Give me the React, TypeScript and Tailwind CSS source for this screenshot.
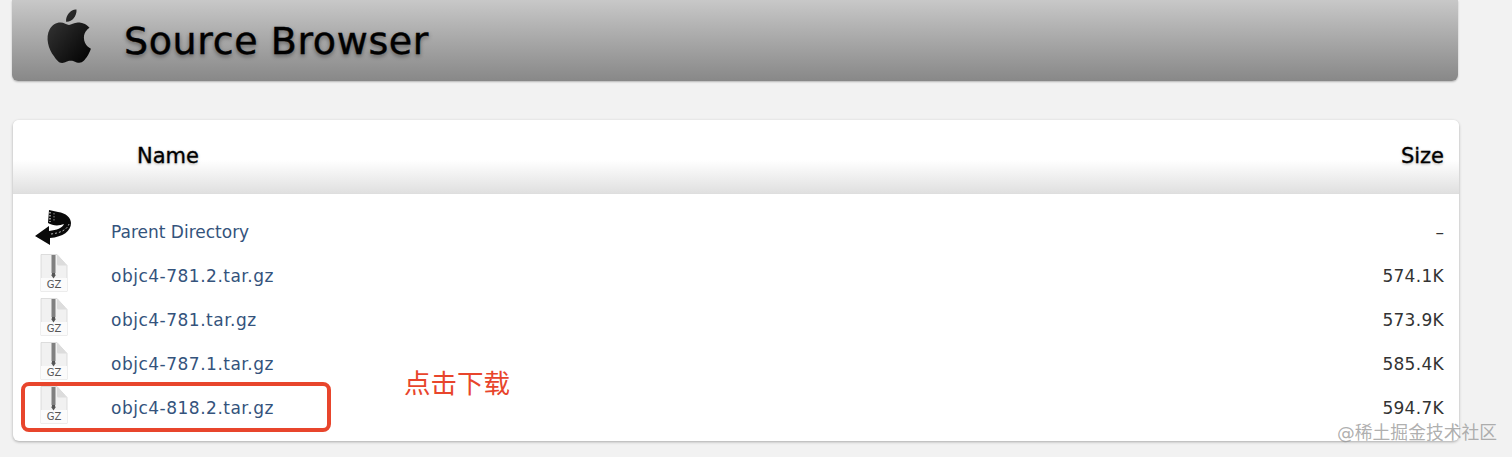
const files = [
  { name: 'objc4-781.2.tar.gz', size: '574.1K' },
  { name: 'objc4-781.tar.gz', size: '573.9K' },
  { name: 'objc4-787.1.tar.gz', size: '585.4K' },
  { name: 'objc4-818.2.tar.gz', size: '594.7K' },
]

function AppleLogo() {
  return (
    <svg width="46" height="54" viewBox="0 0 46 52" preserveAspectRatio="none" aria-hidden="true">
      <defs>
        <linearGradient id="apple" x1="0" y1="0" x2="1" y2="1">
          <stop offset="0" stopColor="#3a3a3a" />
          <stop offset="1" stopColor="#000000" />
        </linearGradient>
      </defs>
      <path
        fill="url(#apple)"
        d="M31.5 0.5c.3 3.4-1 6.3-2.8 8.4-1.9 2.2-4.7 3.7-7.6 3.4-.4-3 1-6.2 2.7-8.1C25.700 1.600 28.900.2 31.500.5zM44.500 18c-.3.2-5.700 3.300-5.600 9.800.1 7.800 6.900 10.400 7 10.400-.1.200-1.100 3.700-3.600 7.300-2.200 3.100-4.400 6.200-8 6.300-3.500.1-4.600-2-8.600-2s-5.200 1.900-8.500 2.100c-3.400.1-6-3.400-8.200-6.500C3.500 39.100.1 27.400 4.700 19.500c2.300-3.900 6.300-6.400 10.700-6.400 3.300-.1 6.500 2.200 8.600 2.200s5.400-2.700 9.800-2.300c1.800.1 7 .7 10.700 5z"
      />
    </svg>
  )
}

function BackIcon() {
  return (
    <svg width="36" height="36" viewBox="0 0 36 36" aria-hidden="true">
      <path
        fill="#0a0a0a"
        d="M14 1l9 2C31 4 36 9 36 14c0 8-8 14-21 15v7L0 27l14-10v5c8-1 13-3 15-7-5 2-11 2-16-1z"
      />
      <path fill="none" stroke="#b5b5b5" strokeWidth="1.500" strokeDasharray="1.500 1.500" d="M15 3v10" />
      <path fill="none" stroke="#8a8a8a" strokeWidth="1" strokeDasharray="1.500 1.500" d="M19 4v9" />
      <path fill="none" stroke="#e5e5e5" strokeWidth="0.800" strokeDasharray="2 2" d="M16 25c9-1 16-4 18-10" />
    </svg>
  )
}

function ZipIcon() {
  return (
    <svg width="28" height="38" viewBox="0 0 28 38" aria-hidden="true">
      <path fill="#f1f1f1" stroke="#d6d6d6" strokeWidth="0.800" d="M1 .5h16l10 11v26H1z" />
      <path fill="#dcdcdc" d="M17 .5l10 11H18.500a1.500 1.500 0 0 1-1.500-1.500z" />
      <rect x="1" y="24" width="26" height="13.500" fill="#fbfbfb" />
      <rect x="11.500" y="1" width="4" height="18" fill="#808080" />
      <path fill="#555555" d="M12 19h3l.5 2.500-2 3-2-3z" />
      <text x="14" y="33.500" textAnchor="middle" fontSize="10" fill="#555555" fontFamily="'DejaVu Sans', sans-serif">
        GZ
      </text>
    </svg>
  )
}

export default function App() {
  return (
    <div className="relative h-[457px] w-[1512px] overflow-hidden bg-[#f2f2f2] font-['DejaVu_Sans','Noto_Sans_CJK_SC',sans-serif]">
      <div className="ml-3 flex h-[81px] w-[1446px] items-center rounded-b-md bg-gradient-to-b from-[#c8c8c8] to-[#888888] pl-[33px] shadow-[0_1px_2px_rgba(0,0,0,0.25)]">
        <div className="mb-[9px]">
          <AppleLogo />
        </div>
        <h1 className="ml-[33px] text-[38px] leading-none tracking-[0.6px] text-black [-webkit-text-stroke:0.4px_black] [text-shadow:0_2px_4px_rgba(0,0,0,0.45)]">
          Source Browser
        </h1>
      </div>

      <div className="mt-[39px] ml-[13px] w-[1446px] rounded-md bg-white shadow-[0_1px_3px_rgba(0,0,0,0.3)]">
        <div className="flex h-[74px] items-start justify-between rounded-t-md border-b border-[#dedede] bg-gradient-to-b from-white from-[55%] to-[#e0e0e0] pt-[23px] pr-[15px] pl-[124px] text-[21px] leading-[26px] text-black [-webkit-text-stroke:0.3px_black] [text-shadow:0_1px_3px_rgba(0,0,0,0.35)]">
          <span>Name</span>
          <span>Size</span>
        </div>

        <div className="pt-[15px] pb-[12px]">
          <div className="flex h-11 items-center pr-[15px]">
            <div className="mb-[8px] w-[98px] pl-[22px]">
              <BackIcon />
            </div>
            <a className="flex-1 pt-[3px] text-[17px] text-[#34537c]">Parent Directory</a>
            <span className="pt-[3px] text-[17px] text-[#333333]">–</span>
          </div>
          {files.map((file) => (
            <div key={file.name} className="flex h-11 items-center pr-[15px]">
              <div className="mb-[5px] h-[38px] w-[98px] pl-[27px]">
                <ZipIcon />
              </div>
              <a className="flex-1 pt-[3px] text-[17px] tracking-[0.5px] text-[#34537c]">{file.name}</a>
              <span className="pt-[3px] text-[17px] tracking-[0.3px] text-[#333333]">{file.size}</span>
            </div>
          ))}
        </div>
      </div>

      <div className="absolute top-[382px] left-[21px] h-[50px] w-[310px] rounded-lg border-[4px] border-[#e8452c]" />
      <span className="absolute top-[369px] left-[404px] text-[26.500px] leading-[30px] text-[#e8452c]">点击下载</span>
      <span className="absolute top-[422px] left-[1337px] text-[17.800px] leading-[22px] text-[#9a9a9a]/80">@稀土掘金技术社区</span>
    </div>
  )
}
